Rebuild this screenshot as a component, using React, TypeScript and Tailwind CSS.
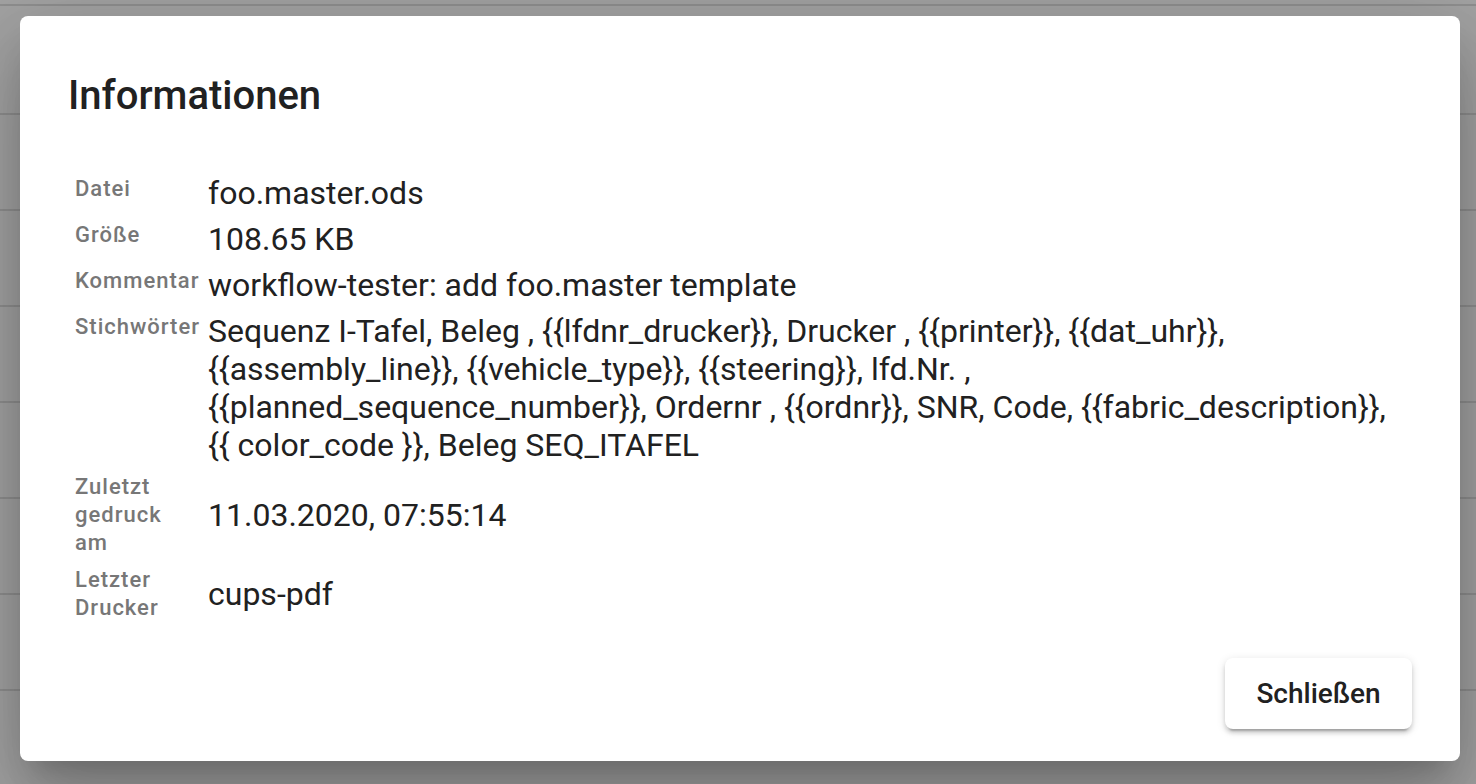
const rows = [
  { label: "Datei", value: "foo.master.ods" },
  { label: "Größe", value: "108.65 KB" },
  { label: "Kommentar", value: "workflow-tester: add foo.master template" },
  {
    label: "Stichwörter",
    value: [
      "Sequenz I-Tafel, Beleg , {{lfdnr_drucker}}, Drucker , {{printer}}, {{dat_uhr}},",
      "{{assembly_line}}, {{vehicle_type}}, {{steering}}, lfd.Nr. ,",
      "{{planned_sequence_number}}, Ordernr , {{ordnr}}, SNR, Code, {{fabric_description}},",
      "{{ color_code }}, Beleg SEQ_ITAFEL",
    ],
  },
  { label: "Zuletzt gedruck am", value: "11.03.2020, 07:55:14" },
  { label: "Letzter Drucker", value: "cups-pdf" },
]

function BackgroundTable() {
  return (
    <div className="flex flex-col">
      <div className="h-[4px]" />
      <div className="h-[2px] bg-[#8f8f8f]" />
      <div className="h-[107px]" />
      {Array.from({ length: 7 }, (_, i) => (
        <div key={i} className="flex flex-col">
          <div className="h-[2px] bg-[#8f8f8f]" />
          <div className="h-[94px]" />
        </div>
      ))}
    </div>
  )
}

export default function App() {
  return (
    <div className="relative h-[784px] w-full overflow-hidden bg-[#a3a3a3] font-[Roboto,sans-serif]">
      <BackgroundTable />

      <div className="absolute left-[20px] top-[16px] flex h-[745px] w-[1440px] flex-col rounded-[8px] bg-white px-[48px] pt-[48px] pb-[32px] shadow-[0_22px_30px_-14px_rgba(0,0,0,0.2),0_48px_76px_6px_rgba(0,0,0,0.14),0_18px_92px_16px_rgba(0,0,0,0.12)]">
        <h2 className="text-[40px] leading-[64px] font-medium text-[#212121]">Informationen</h2>

        <div className="mt-[46px] ml-[7px] grid grid-cols-[124px_1fr] gap-x-[9px] gap-y-[8px]">
          {rows.map((row) => (
            <div key={row.label} className="contents">
              <div className="self-start pt-[1px] text-[22px] leading-[28px] font-medium tracking-[1px] text-[#777777]">
                {row.label}
              </div>
              <div className="self-center text-[32px] leading-[38px] text-[#212121]">
                {Array.isArray(row.value)
                  ? row.value.map((line, i) => (
                      <span key={i}>
                        {line}
                        {i < row.value.length - 1 && <br />}
                      </span>
                    ))
                  : row.value}
              </div>
            </div>
          ))}
        </div>

        <div className="mt-auto flex justify-end">
          <button className="h-[71px] w-[187px] rounded-[8px] bg-white text-[28px] font-medium text-[#212121] shadow-[0_6px_2px_-4px_rgba(0,0,0,0.2),0_4px_4px_0_rgba(0,0,0,0.14),0_2px_10px_0_rgba(0,0,0,0.12)]">
            Schließen
          </button>
        </div>
      </div>
    </div>
  )
}
